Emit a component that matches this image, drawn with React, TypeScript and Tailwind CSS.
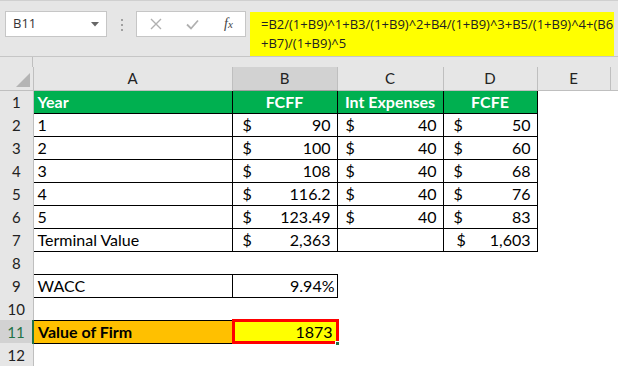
import React from "react";

const font = { fontFamily: "Lato, 'Open Sans', sans-serif" };

function Money({ v, pl = "pl-[10px]" }: { v: string; pl?: string }) {
  return (
    <div className={`flex justify-between items-end ${pl} pr-[6px]`}>
      <span>$</span>
      <span>{v}</span>
    </div>
  );
}

const rows: { n: number; a: string; b: string; c: string; d: string }[] = [
  { n: 2, a: "1", b: "90", c: "40", d: "50" },
  { n: 3, a: "2", b: "100", c: "40", d: "60" },
  { n: 4, a: "3", b: "108", c: "40", d: "68" },
  { n: 5, a: "4", b: "116.2", c: "40", d: "76" },
  { n: 6, a: "5", b: "123.49", c: "40", d: "83" },
];

export default function App() {
  const rh = "w-[33px] bg-[#e6e6e6] border-r border-[#bfbfbf] text-center text-[15px] text-[#222] align-middle p-0 leading-[20px]";
  const bc = "border border-black p-0 align-middle leading-[20px]";
  const tr = "h-[23px]";
  return (
    <div className="w-[618px] h-[367px] overflow-hidden bg-white text-black" style={font}>
      {/* Toolbar */}
      <div className="h-[57px] bg-[#e6e6e6] border-t border-[#d0d0d0] border-b border-b-[#c6c6c6] flex items-start">
        <div className="ml-[5px] mt-[10px] w-[102px] h-[26px] bg-white border border-[#c6c6c6] flex items-center justify-between pl-[7px] pr-[7px]">
          <span className="text-[13px] text-[#333]" style={{ fontFamily: "'Open Sans', sans-serif" }}>B11</span>
          <svg width="8" height="5" viewBox="0 0 8 5"><polygon points="0,0 8,0 4,4.5" fill="#666" /></svg>
        </div>
        <div className="ml-[14px] mt-[18px] flex flex-col gap-[3px]">
          <span className="w-[2px] h-[2px] bg-[#a0a0a0] block" />
          <span className="w-[2px] h-[2px] bg-[#a0a0a0] block" />
          <span className="w-[2px] h-[2px] bg-[#a0a0a0] block" />
        </div>
        <div className="ml-[13px] mt-[10px] w-[110px] h-[26px] bg-white border border-[#c6c6c6] flex items-center">
          <svg className="ml-[13px]" width="12" height="12" viewBox="0 0 12 12">
            <path d="M1 1 L11 11 M11 1 L1 11" stroke="#b0b0b0" strokeWidth="1.4" fill="none" />
          </svg>
          <svg className="ml-[24px]" width="13" height="11" viewBox="0 0 13 11">
            <path d="M1 5.5 L5 9.5 L12 1.5" stroke="#b0b0b0" strokeWidth="1.8" fill="none" />
          </svg>
          <span className="ml-[25px] text-[14px] italic text-[#444] leading-none" style={{ fontFamily: "'Liberation Serif', serif" }}>
            f<span className="text-[11px]">x</span>
          </span>
        </div>
        <div className="ml-[4px] mt-[11px] w-[364px] h-[44px] bg-[#ffff00] pl-[11px] pt-[3px] leading-[19px] text-[#222] whitespace-nowrap" style={{ fontFamily: "'Open Sans', sans-serif", fontSize: "13px" }}>
          <div>=B2/(1+B9)^1+B3/(1+B9)^2+B4/(1+B9)^3+B5/(1+B9)^4+(B6</div>
          <div>+B7)/(1+B9)^5</div>
        </div>
        <div className="flex-1" />
      </div>

      {/* Grid */}
      <div className="bg-[#e6e6e6] h-[10px] flex">
        <div className="w-[33px] border-r border-[#bfbfbf]" />
      </div>
      <table className="table-fixed border-collapse text-[16px]" style={{ width: 640 }}>
        <colgroup>
          <col style={{ width: 33 }} />
          <col style={{ width: 199 }} />
          <col style={{ width: 105 }} />
          <col style={{ width: 106 }} />
          <col style={{ width: 94 }} />
          <col style={{ width: 73 }} />
          <col style={{ width: 30 }} />
        </colgroup>
        <thead>
          <tr className="h-[22px] bg-[#e6e6e6] text-[15px] text-[#222]">
            <th className="p-0 border-r border-b border-[#bfbfbf] relative">
              <svg className="absolute right-[3px] bottom-[3px]" width="14" height="14" viewBox="0 0 14 14">
                <polygon points="14,0 14,14 0,14" fill="#b4b4b4" />
              </svg>
            </th>
            <th className="p-0 font-normal border-r border-b border-[#bfbfbf]">A</th>
            <th className="p-0 font-normal border-r border-b border-[#bfbfbf] bg-[#d2d2d2] border-b-[#9f9f9f]">B</th>
            <th className="p-0 font-normal border-r border-b border-[#bfbfbf]">C</th>
            <th className="p-0 font-normal border-r border-b border-[#bfbfbf]">D</th>
            <th className="p-0 font-normal border-r border-b border-[#bfbfbf]">E</th>
            <th className="p-0 font-normal border-b border-[#bfbfbf]"></th>
          </tr>
        </thead>
        <tbody>
          <tr className={tr}>
            <td className={rh}>1</td>
            <td className={`${bc} bg-[#00b050] text-white font-bold pl-[4px]`}>Year</td>
            <td className={`${bc} bg-[#00b050] text-white font-bold text-center`}>FCFF</td>
            <td className={`${bc} bg-[#00b050] text-white font-bold text-center`}>Int Expenses</td>
            <td className={`${bc} bg-[#00b050] text-white font-bold text-center`}>FCFE</td>
            <td></td>
            <td></td>
          </tr>
          {rows.map((r) => (
            <tr key={r.n} className={tr}>
              <td className={rh}>{r.n}</td>
              <td className={`${bc} pl-[4px]`}>{r.a}</td>
              <td className={bc}><Money v={r.b} /></td>
              <td className={bc}><Money v={r.c} pl="pl-[8px]" /></td>
              <td className={bc}><Money v={r.d} /></td>
              <td></td>
              <td></td>
            </tr>
          ))}
          <tr className={tr}>
            <td className={rh}>7</td>
            <td className={`${bc} pl-[4px]`}>Terminal Value</td>
            <td className={bc}><Money v="2,363" /></td>
            <td className={bc}></td>
            <td className={bc}><Money v="1,603" pl="pl-[13px]" /></td>
            <td></td>
            <td></td>
          </tr>
          <tr className={tr}>
            <td className={rh}>8</td>
            <td colSpan={6}></td>
          </tr>
          <tr className={tr}>
            <td className={rh}>9</td>
            <td className={`${bc} pl-[4px]`}>WACC</td>
            <td className={`${bc} text-right pr-[2px]`}>9.94%</td>
            <td colSpan={4}></td>
          </tr>
          <tr className={tr}>
            <td className={rh}>10</td>
            <td colSpan={6}></td>
          </tr>
          <tr className={tr}>
            <td className="w-[33px] bg-[#d2d2d2] border-r-2 border-[#217346] text-center text-[15px] text-[#217346] align-middle p-0 leading-[20px]">11</td>
            <td className={`${bc} bg-[#ffc000] font-bold pl-[4px]`}>Value of Firm</td>
            <td className={`${bc} bg-[#ffff00] text-right pr-[4px] relative`}>
              1873
              <div className="absolute -left-[1px] -top-[2px] -right-[2px] -bottom-[1px] border-[3px] border-[#ff0000]" />
              <div className="absolute -right-[3px] -bottom-[3px] w-[5px] h-[5px] bg-[#217346] border border-white" />
            </td>
            <td colSpan={4}></td>
          </tr>
          <tr className={tr}>
            <td className={rh}>12</td>
            <td colSpan={6}></td>
          </tr>
        </tbody>
      </table>
    </div>
  );
}
